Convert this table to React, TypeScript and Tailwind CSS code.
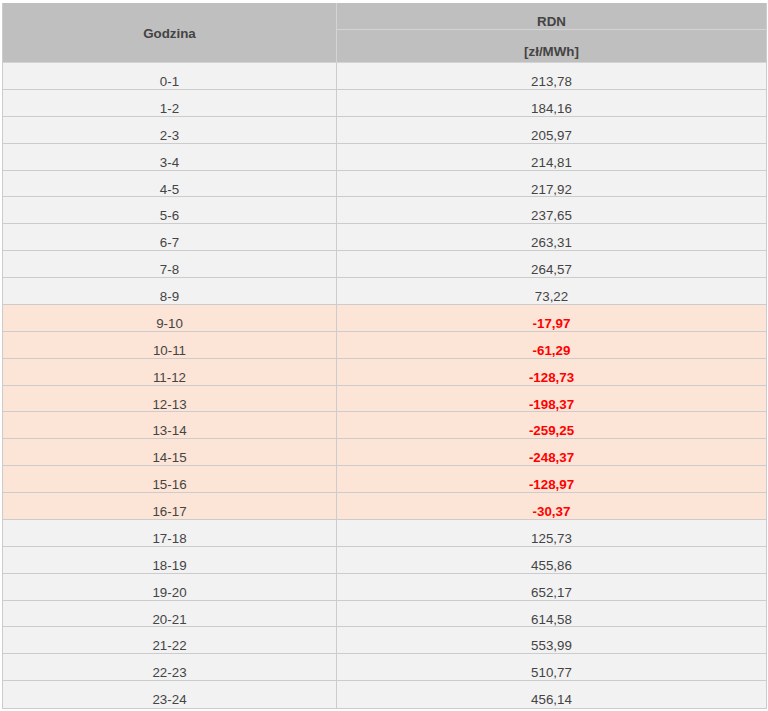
const rows: [string, string][] = [
  ["0-1", "213,78"],
  ["1-2", "184,16"],
  ["2-3", "205,97"],
  ["3-4", "214,81"],
  ["4-5", "217,92"],
  ["5-6", "237,65"],
  ["6-7", "263,31"],
  ["7-8", "264,57"],
  ["8-9", "73,22"],
  ["9-10", "-17,97"],
  ["10-11", "-61,29"],
  ["11-12", "-128,73"],
  ["12-13", "-198,37"],
  ["13-14", "-259,25"],
  ["14-15", "-248,37"],
  ["15-16", "-128,97"],
  ["16-17", "-30,37"],
  ["17-18", "125,73"],
  ["18-19", "455,86"],
  ["19-20", "652,17"],
  ["20-21", "614,58"],
  ["21-22", "553,99"],
  ["22-23", "510,77"],
  ["23-24", "456,14"],
];

export default function App() {
  return (
    <div className="min-h-screen bg-white pl-[2px] pt-[3px] font-['Liberation_Sans',Arial,sans-serif] text-[13.33px] text-[#444]">
      <div className="w-[765px] border-x border-b border-[#cccccc]">
        {/* naglowek */}
        <div className="flex h-[60px] bg-[#bfbfbf] font-bold border-b border-[#d4d4d4]">
          <div className="w-[334px] border-r border-[#d4d4d4] flex items-center justify-center pt-[2px]">
            Godzina
          </div>
          <div className="flex-1 flex flex-col">
            <div className="h-[27px] border-b border-[#d4d4d4] pt-[11px] leading-[15px] text-center">
              RDN
            </div>
            <div className="flex-1 pt-[14px] leading-[15px] text-center">[zł/MWh]</div>
          </div>
        </div>

        {rows.map(([h, v]) => {
          const neg = v.startsWith("-");
          return (
            <div
              key={h}
              className={`flex h-[26.88px] border-b border-[#cccccc] last:border-b-0 ${
                neg ? "bg-[#fce4d6]" : "bg-[#f2f2f2]"
              }`}
            >
              <div className="w-[334px] border-r border-[#cccccc] pt-[11px] leading-[15px] text-center">
                {h}
              </div>
              <div
                className={`flex-1 pt-[11px] leading-[15px] text-center ${
                  neg ? "font-bold text-[#ff0000]" : ""
                }`}
              >
                {v}
              </div>
            </div>
          );
        })}
      </div>
    </div>
  );
}
